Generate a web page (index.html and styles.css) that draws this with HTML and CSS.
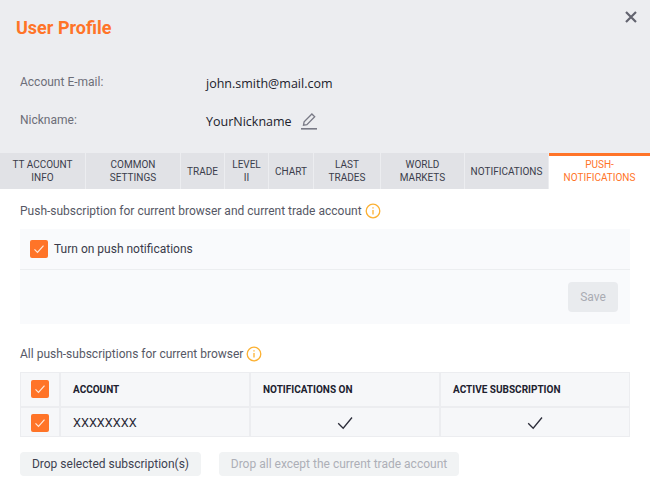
FILE: index.html
```html
<!DOCTYPE html>
<html lang="en">
<head>
<meta charset="utf-8">
<title>User Profile</title>
<link rel="stylesheet" href="styles.css">
</head>
<body>
<div class="dialog">
  <header class="head">
    <h1 class="title">User Profile</h1>
    <svg class="close" viewBox="0 0 12 12" width="12" height="12"><path d="M1 1l10 10M11 1L1 11"/></svg>
    <div class="info">
      <div class="row row-mail"><span class="label">Account E-mail:</span><span class="value">john.smith@mail.com</span></div>
      <div class="row row-nick"><span class="label">Nickname:</span><span class="value">YourNickname</span>
        <svg class="pencil" viewBox="0 0 18 18" width="18" height="18"><path d="M3.5 13.2l.6-3.4L11.9 2l2.8 2.8-7.8 7.8z"/><path class="line" d="M1 16.8h16"/></svg>
      </div>
    </div>
  </header>
  <nav class="tabs">
    <div class="tab t1">TT ACCOUNT INFO</div>
    <div class="tab t2">COMMON SETTINGS</div>
    <div class="tab t3">TRADE</div>
    <div class="tab t4">LEVEL II</div>
    <div class="tab t5">CHART</div>
    <div class="tab t6">LAST TRADES</div>
    <div class="tab t7">WORLD MARKETS</div>
    <div class="tab t8">NOTIFICATIONS</div>
    <div class="tab t9 active">PUSH-NOTIFICATIONS</div>
  </nav>
  <main class="content">
    <div class="section-title first">Push-subscription for current browser and current trade account
      <svg class="info-icon" viewBox="0 0 16 16" width="16" height="16"><circle cx="8" cy="8" r="6.8"/><path d="M8 7v4.6M8 4.2v1.4"/></svg>
    </div>
    <div class="panel">
      <div class="panel-top">
        <span class="check"><svg viewBox="0 0 18 18" width="18" height="18"><path d="M4.5 9.3l3 3 6-6.6"/></svg></span>
        <span class="check-label">Turn on push notifications</span>
      </div>
      <div class="panel-bottom"><button class="btn save" type="button">Save</button></div>
    </div>
    <div class="section-title second">All push-subscriptions for current browser
      <svg class="info-icon" viewBox="0 0 16 16" width="16" height="16"><circle cx="8" cy="8" r="6.8"/><path d="M8 7v4.6M8 4.2v1.4"/></svg>
    </div>
    <table class="grid">
      <thead>
        <tr>
          <th class="c-check"><span class="check"><svg viewBox="0 0 18 18" width="18" height="18"><path d="M4.5 9.3l3 3 6-6.6"/></svg></span></th>
          <th class="c-account">ACCOUNT</th>
          <th class="c-notif">NOTIFICATIONS ON</th>
          <th class="c-active">ACTIVE SUBSCRIPTION</th>
        </tr>
      </thead>
      <tbody>
        <tr>
          <td class="c-check"><span class="check"><svg viewBox="0 0 18 18" width="18" height="18"><path d="M4.5 9.3l3 3 6-6.6"/></svg></span></td>
          <td class="acct"><span class="acct-text">XXXXXXXX</span></td>
          <td class="mark"><svg viewBox="0 0 16 14" width="16" height="14"><path d="M1.2 7.2l5 5L15 1.5"/></svg></td>
          <td class="mark"><svg viewBox="0 0 16 14" width="16" height="14"><path d="M1.2 7.2l5 5L15 1.5"/></svg></td>
        </tr>
      </tbody>
    </table>
    <div class="actions">
      <button class="btn drop" type="button">Drop selected subscription(s)</button>
      <button class="btn drop-all" type="button">Drop all except the current trade account</button>
    </div>
  </main>
</div>
</body>
</html>
```
FILE: styles.css
```css
* { box-sizing: border-box; }
html, body { margin: 0; padding: 0; }
body { width: 650px; height: 484px; overflow: hidden; background: #fff; font-family: Roboto, "Liberation Sans", sans-serif; }
.dialog { width: 650px; height: 484px; display: flex; flex-direction: column; }
.head { position: relative; height: 153px; background: #ecedf0; padding: 16px 16px 0; }
.title { margin: 0; font-size: 18px; line-height: 24px; font-weight: 700; color: #ff7428; }
.close { position: absolute; top: 11px; right: 13px; }
.close path { fill: none; stroke: #63646f; stroke-width: 2.2; }
.info { padding: 23px 0 0 4px; }
.row { display: flex; align-items: center; height: 38px; }
.label { width: 186px; font-size: 12px; color: #6c6e78; }
.value { font-size: 12.5px; color: #20212b; font-family: "Open Sans", Roboto, sans-serif; }
.row-mail .value { padding-top: 3px; }
.row-nick .value { padding-top: 2px; }
.pencil { margin: 1px 0 0 8px; }
.pencil path { fill: none; stroke: #797a86; stroke-width: 1.3; }
.pencil .line { stroke-width: 1.6; }
.tabs { display: flex; height: 36px; background: #e1e2e6; }
.tab { display: flex; align-items: center; justify-content: center; text-align: center; padding: 0 4px; font-size: 10px; line-height: 13px; color: #3b3d4b; border-right: 1px solid #ecedf0; flex: none; }
.t1 { width: 86px; padding: 0 10px; }
.t2 { width: 95px; padding: 0 20px; }
.t3 { width: 44px; }
.t4 { width: 44px; padding: 0 8px; }
.t5 { width: 45px; }
.t6 { width: 67px; padding: 0 15px; }
.t7 { width: 84px; padding: 0 14px; }
.t8 { width: 84px; padding: 0; }
.t9 { width: 101px; padding: 0 8px 3px; }
.active { background: #fff; color: #ff7428; border-top: 3px solid #ff7428; border-right: 0; }
.content { padding: 0 20px; flex: 1; }
.section-title { display: flex; align-items: center; gap: 3px; font-size: 12px; color: #565865; line-height: 16px; }
.first { margin-top: 14px; }
.second { margin-top: 22px; }
.info-icon circle, .info-icon path { fill: none; stroke: #fcb133; stroke-width: 1.3; }
.panel { margin-top: 10px; background: #f9fafc; height: 95px; }
.panel-top { display: flex; align-items: center; height: 41px; padding-left: 10px; border-bottom: 1px solid #eceef0; }
.check { display: inline-flex; width: 18px; height: 18px; background: #ff7428; border-radius: 2px; flex: none; }
.check path { fill: none; stroke: #ffe9da; stroke-width: 1.2; }
.check-label { margin-left: 6px; font-size: 12px; color: #3a3a4a; }
.panel-bottom { display: flex; justify-content: flex-end; padding: 12px 12px 0 0; }
.btn { border: 0; border-radius: 4px; background: #f1f3f4; font-family: Roboto, "Liberation Sans", sans-serif; font-size: 12px; padding: 0; }
.save { width: 50px; height: 30px; background: #e9ebee; color: #a9abb3; }
.grid { margin-top: 10px; width: 610px; height: 65px; border-collapse: collapse; table-layout: fixed; background: #f6f7f9; }
.grid th, .grid td { border: 2px solid #ecedf0; padding: 0; }
.grid tr > :first-child { border-left-width: 1px; }
.grid tr > :last-child { border-right-width: 1px; }
.grid thead th { border-top-width: 1px; }
.grid tbody td { border-bottom-width: 1px; }
.grid thead th { height: 34px; font-size: 10px; font-weight: 700; color: #20212f; text-align: left; padding-left: 12.5px; }
.grid thead th.c-check, .grid td.c-check { padding: 0; text-align: center; }
.grid thead th.c-check .check, .grid td.c-check .check { vertical-align: middle; }
.c-check { width: 39px; }
.c-account { width: 190px; }
.c-notif { width: 190px; }
.grid .acct { padding-left: 12.5px; font-size: 12.7px; color: #2b2b38; }
.acct-text { display: block; padding-top: 2px; }
.mark { text-align: center; }
.mark svg { display: inline-block; vertical-align: middle; }
.mark path { fill: none; stroke: #2c2d3a; stroke-width: 1.3; }
.actions { display: flex; gap: 18px; margin-top: 15px; }
.drop { width: 181px; height: 24px; color: #3d4150; }
.drop-all { width: 240px; height: 24px; color: #adafb7; }
```
